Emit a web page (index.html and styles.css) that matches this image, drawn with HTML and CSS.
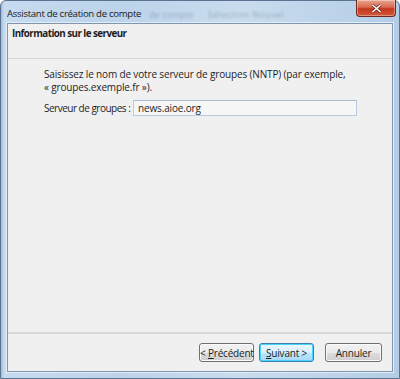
FILE: index.html
```html
<!DOCTYPE html>
<html lang="fr">
<head>
    <meta charset="UTF-8">
    <title>Assistant de création de compte</title>
    <link rel="stylesheet" href="styles.css">
</head>
<body>
    <div class="window">
        <div class="titlebar">
            <span class="title">Assistant de création de compte</span>
            <span class="ghost one">de compte</span>
            <span class="ghost two">Sélection Nouvel</span>
            <div class="close">
                <svg width="11" height="9" viewBox="0 0 11 9">
                    <path d="M1.5 1 L9.5 8 M9.5 1 L1.5 8" stroke="#6b2a20" stroke-width="3"/>
                    <path d="M1.5 1 L9.5 8 M9.5 1 L1.5 8" stroke="#fff" stroke-width="1.6"/>
                </svg>
            </div>
        </div>
        <div class="client">
            <div class="header">Information sur le serveur</div>
            <div class="page">
                <p class="desc">Saisissez le nom de votre serveur de groupes (NNTP) (par exemple,<br>« groupes.exemple.fr »).</p>
                <div class="field">
                    <label for="server">Serveur de groupes :</label>
                    <input id="server" type="text" value="news.aioe.org">
                </div>
            </div>
            <div class="buttons">
                <button class="btn">&lt; <u>P</u>récédent</button>
                <button class="btn default"><u>S</u>uivant &gt;</button>
                <button class="btn cancel">Annuler</button>
            </div>
        </div>
    </div>
</body>
</html>
```

FILE: styles.css
```css
html, body {
    margin: 0;
    padding: 0;
}
body {
    width: 400px;
    height: 379px;
    overflow: hidden;
    font-family: "Open Sans", "Noto Sans", sans-serif;
    font-size: 10px;
    color: #1e1e1e;
}
.window {
    box-sizing: border-box;
    width: 400px;
    height: 379px;
    display: flex;
    flex-direction: column;
    padding: 0 6px 6px 6px;
    background: linear-gradient(90deg, #9fbcd9 0px, #c7dbef 3px, #bcd3ea 30%, #c9dcee 60%, #b4cde6 100%);
    border: 1px solid #5b7290;
    border-radius: 6px 6px 0 0;
    position: relative;
}
.titlebar {
    height: 22px;
    display: flex;
    align-items: center;
    position: relative;
    white-space: nowrap;
}
.title {
    font-size: 9.6px;
    letter-spacing: -0.3px;
    color: #1a1a1a;
    margin-top: 2px;
}
.ghost {
    margin-top: 5px;
    font-size: 9px;
    color: #7489a0;
    filter: blur(1.1px);
    opacity: 0.55;
}
.ghost.one {
    margin-left: 8px;
}
.ghost.two {
    margin-left: 14px;
    letter-spacing: 0.4px;
}
.close {
    position: absolute;
    top: -1px;
    right: -3px;
    width: 40px;
    height: 17px;
    border: 1px solid #6a2a22;
    border-top: none;
    border-radius: 0 0 4px 4px;
    background: linear-gradient(#e8a590 0%, #d9694e 45%, #c2381c 55%, #d5583a 100%);
    box-shadow: inset 0 0 0 1px rgba(255,255,255,0.35);
    display: flex;
    align-items: center;
    justify-content: center;
    box-sizing: border-box;
}
.client {
    flex: 1;
    display: flex;
    flex-direction: column;
    background: #f0f0f0;
    border: 1px solid #7e95ae;
    box-shadow: 0 0 0 1px #e3edf7;
}
.header {
    height: 35px;
    box-sizing: border-box;
    padding: 3px 0 0 4px;
    font-weight: bold;
    font-size: 9.8px;
    letter-spacing: -0.55px;
    border-bottom: 1px solid #d5d5d5;
    background: #f0f0f0;
}
.page {
    flex: 1;
    padding: 9px 0 0 36px;
    border-bottom: 2px solid #d9d9d9;
}
.desc {
    margin: 0;
    line-height: 13px;
    letter-spacing: -0.15px;
}
.field {
    display: flex;
    align-items: center;
    margin-top: 6px;
    white-space: nowrap;
}
.field label {
    flex: 0 0 89px;
    letter-spacing: -0.5px;
}
.field input {
    width: 224px;
    height: 16px;
    box-sizing: border-box;
    border: 1px solid #b9cbe1;
    border-top-color: #aabbd6;
    background: #f6f6f6;
    font-family: inherit;
    font-size: 10px;
    letter-spacing: -0.15px;
    padding: 0 0 0 4px;
    color: #1e1e1e;
    outline: none;
}
.buttons {
    height: 37px;
    display: flex;
    align-items: center;
    justify-content: flex-end;
    padding-right: 10px;
    gap: 5px;
    white-space: nowrap;
}
.btn {
    height: 19px;
    width: 55px;
    box-sizing: border-box;
    padding: 0;
    font-family: inherit;
    font-size: 10px;
    letter-spacing: -0.2px;
    color: #1e1e1e;
    border: 1px solid #707070;
    border-radius: 3px;
    background: linear-gradient(#f2f2f2 0%, #ebebeb 50%, #dddddd 51%, #cfcfcf 100%);
    box-shadow: inset 0 0 0 1px #fbfbfb;
}
.btn.default {
    border-color: #3c7fb1;
    box-shadow: inset 0 0 0 1px #48d5fb;
    background: linear-gradient(#eaf6fd 0%, #d9f0fc 50%, #bee6fd 51%, #a7d9f5 100%);
}
.btn.cancel {
    margin-left: 6px;
    width: 57px;
}
```
